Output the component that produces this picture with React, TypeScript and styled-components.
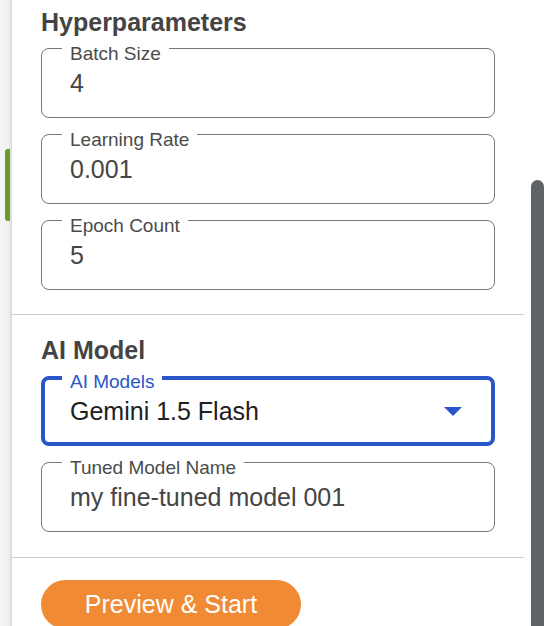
import * as React from 'react';
import styled, { createGlobalStyle } from 'styled-components';

const GlobalStyle = createGlobalStyle`
  html, body {
    margin: 0;
    padding: 0;
    height: 100%;
    overflow: hidden;
    background: #fff;
  }
  body {
    font-family: 'Liberation Sans', Arial, Helvetica, sans-serif;
  }
`;

const Page = styled.div`
  display: flex;
  width: 544px;
  height: 626px;
  overflow: hidden;
`;

const SideRail = styled.div`
  flex: 0 0 12px;
  padding-top: 149px;
  background: linear-gradient(to right, #f4f5f7 0, #eff1f3 70%, #d6d7da 100%);
`;

const RailTab = styled.div`
  margin-left: 5px;
  width: 5px;
  height: 72px;
  background: #6a9a2c;
  border-radius: 3px 0 0 3px;
`;

const Panel = styled.main`
  flex: 0 0 512px;
  background: #fff;
`;

const Section = styled.section<{ $top: number; $bottom: number }>`
  display: flex;
  flex-direction: column;
  padding: ${(p) => p.$top}px 29px ${(p) => p.$bottom}px;
  border-bottom: 1px solid #cdcdcd;
`;

const Heading = styled.h2`
  margin: 0 0 11px;
  font-size: 25px;
  line-height: 30px;
  font-weight: 700;
  color: #444;
`;

const FieldList = styled.div`
  display: flex;
  flex-direction: column;
  gap: 16px;
`;

const Field = styled.div`
  position: relative;
`;

const FieldBox = styled.div<{ $focused?: boolean }>`
  box-sizing: border-box;
  display: flex;
  align-items: center;
  height: 70px;
  padding: 0 ${(p) => (p.$focused ? 29 : 32)}px 0 ${(p) => (p.$focused ? 25 : 28)}px;
  border: ${(p) => (p.$focused ? '4px solid #2856c8' : '1px solid #767676')};
  border-radius: 8px;
  font-size: 25px;
  color: ${(p) => (p.$focused ? '#202020' : '#454545')};
`;

const FieldValue = styled.span`
  flex: 1;
  white-space: nowrap;
`;

const FieldLabel = styled.span<{ $focused?: boolean }>`
  position: absolute;
  top: -4px;
  left: 21px;
  padding: 0 8px;
  background: #fff;
  font-size: 19px;
  line-height: 1;
  color: ${(p) => (p.$focused ? '#2856c8' : '#4b4b4b')};
`;

const ActionBar = styled.div`
  padding: 22px 29px;
`;

const StartButton = styled.button`
  width: 260px;
  height: 49px;
  border: none;
  border-radius: 25px;
  background: #f08a35;
  color: #fff;
  font-family: inherit;
  font-size: 25px;
  cursor: pointer;
`;

const ScrollTrack = styled.div`
  flex: 0 0 20px;
  display: flex;
  justify-content: flex-end;
  padding-top: 180px;
  background: #fff;
`;

const ScrollThumb = styled.div`
  width: 13px;
  border-radius: 7px 7px 0 0;
  background: #5f6368;
`;

function DropArrow() {
  return (
    <svg width="18" height="9" viewBox="0 0 18 9" aria-hidden="true">
      <path d="M0 0h18L9 9z" fill="#2856c8" />
    </svg>
  );
}

type FieldProps = { label: string; value: string; focused?: boolean; select?: boolean };

function OutlinedField({ label, value, focused, select }: FieldProps) {
  return (
    <Field>
      <FieldBox $focused={focused}>
        <FieldValue>{value}</FieldValue>
        {select && <DropArrow />}
      </FieldBox>
      <FieldLabel $focused={focused}>{label}</FieldLabel>
    </Field>
  );
}

export default function App() {
  return (
    <>
      <GlobalStyle />
      <Page>
        <SideRail>
          <RailTab />
        </SideRail>
        <Panel>
          <Section $top={7} $bottom={24}>
            <Heading>Hyperparameters</Heading>
            <FieldList>
              <OutlinedField label="Batch Size" value="4" />
              <OutlinedField label="Learning Rate" value="0.001" />
              <OutlinedField label="Epoch Count" value="5" />
            </FieldList>
          </Section>
          <Section $top={20} $bottom={25}>
            <Heading>AI Model</Heading>
            <FieldList>
              <OutlinedField label="AI Models" value="Gemini 1.5 Flash" focused select />
              <OutlinedField label="Tuned Model Name" value="my fine-tuned model 001" />
            </FieldList>
          </Section>
          <ActionBar>
            <StartButton>Preview &amp; Start</StartButton>
          </ActionBar>
        </Panel>
        <ScrollTrack>
          <ScrollThumb />
        </ScrollTrack>
      </Page>
    </>
  );
}
